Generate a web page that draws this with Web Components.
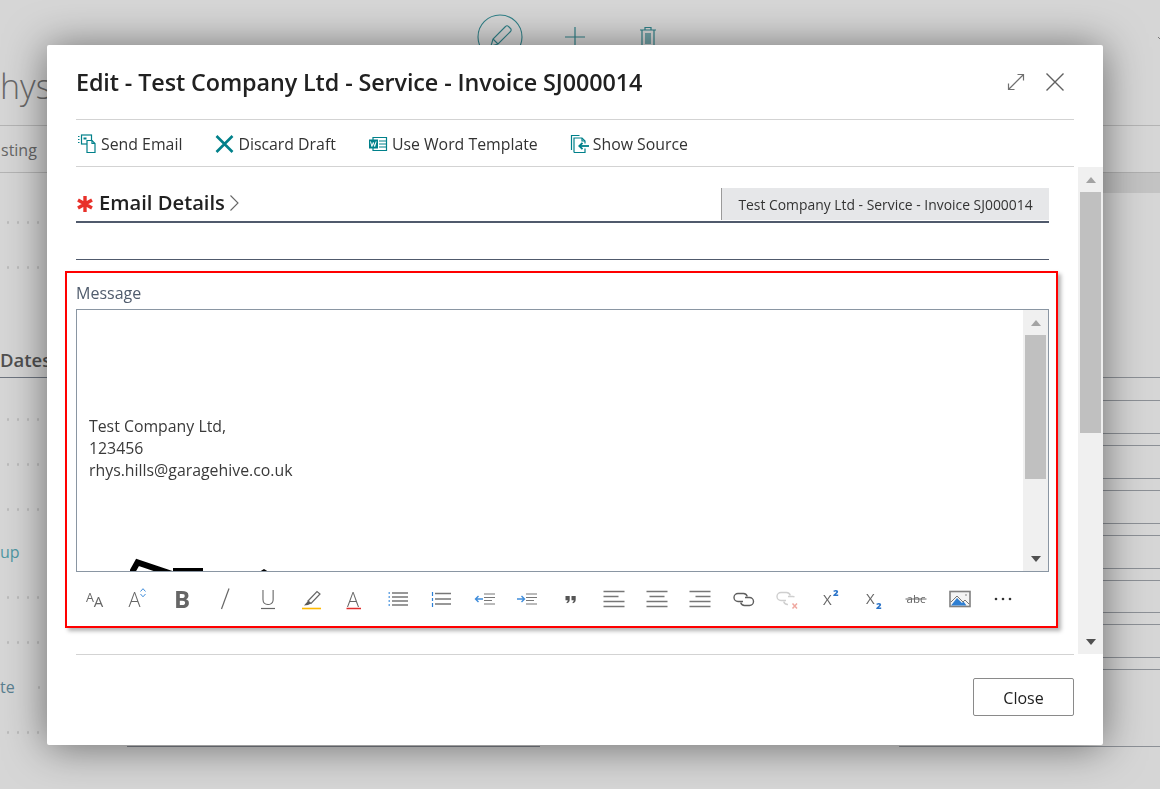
<!DOCTYPE html>
<html>
<head>
<meta charset="utf-8">
<title>Edit email</title>
<style>
  html, body { margin: 0; height: 100%; overflow: hidden; background: #d6d6d6; }
  body { font-family: "Open Sans", "Liberation Sans", sans-serif; }
</style>
</head>
<body>
<bg-page></bg-page>
<modal-dialog heading="Edit - Test Company Ltd - Service - Invoice SJ000014">
  <action-item icon="send" style="margin-left:1px">Send Email</action-item>
  <action-item icon="discard" style="margin-left:32px">Discard Draft</action-item>
  <action-item icon="word" style="margin-left:32px">Use Word Template</action-item>
  <action-item icon="source" style="margin-left:31px">Show Source</action-item>

  <email-details slot="body" subject="Test Company Ltd - Service - Invoice SJ000014"></email-details>
  <message-box slot="body">
    <div>Test Company Ltd,</div>
    <div>123456</div>
    <div>rhys.hills@garagehive.co.uk</div>
  </message-box>
</modal-dialog>

<script>
const TEAL = "#00808a";
const GREY = "#666666";
const BLUE = "#3f8ddb";

const LABEL_FONT = `font-family="Open Sans, sans-serif" fill="${GREY}"`;

const ACTION_ICONS = {
  send: `<g fill="none" stroke="${TEAL}" stroke-width="1.2">
      <path d="M1 2.5h2M1 5.5h2M1 8.5h2" stroke-dasharray="1.5 1"/>
      <rect x="4.5" y="1" width="10" height="9"/>
      <path d="M6.5 3.5h3v2h-3z" fill="${TEAL}" stroke="none"/>
      <path d="M10 6.5h5l3 3v9h-8z" fill="#fff"/>
      <path d="M15 6.5v3h3"/>
    </g>`,
  discard: `<path d="M2.500 2l16 16M18.500 2l-16 16" fill="none" stroke="${TEAL}" stroke-width="2.6"/>`,
  word: `<g fill="none" stroke="${TEAL}" stroke-width="1.2">
      <path d="M5 3.5h13.5v13H5z"/>
      <path d="M11 7h7.5M11 10h7.5M11 13h7.5"/>
      <rect x="1" y="5.5" width="9" height="9" fill="${TEAL}" stroke="none"/>
      <path d="M2.5 7.5l1.4 5 1.4-4 1.4 4 1.4-5" stroke="#fff" stroke-width="1"/>
    </g>`,
  source: `<g fill="none" stroke="${TEAL}" stroke-width="1.2">
      <path d="M2.5 16V1.5h8"/>
      <path d="M5 18.5V4h8l3 3v2.5M16 14.500v4H5"/>
      <path d="M13 4v3h3"/>
      <path d="M20 12H10.500" stroke-width="1.8"/>
      <path d="M13.500 8.800L10.300 12l3.200 3.200" stroke-width="1.8"/>
    </g>`,
};

const TOOL_ICONS = {
  fontname: `<text x="3" y="15" font-size="12.500" font-weight="400" ${LABEL_FONT}>A</text>
    <text x="10.800" y="20" font-size="15" font-weight="400" ${LABEL_FONT}>A</text>`,
  fontsize: `<text x="2.500" y="20" font-size="20" font-weight="300" ${LABEL_FONT}>A</text>
    <path d="M14.500 4.500l2.500-2.800 2.500 2.800M14.500 7l2.500 2.800L19.500 7" fill="none" stroke="${BLUE}"/>`,
  bold: `<text x="5" y="21" font-size="24" font-weight="700" ${LABEL_FONT}>B</text>`,
  italic: `<path d="M16 1.500L8.500 22" stroke="${GREY}" stroke-width="1.200"/>`,
  underline: `<text x="4.500" y="18" font-size="21" font-weight="300" ${LABEL_FONT}>U</text>
    <path d="M5 21.500h14" stroke="${GREY}" stroke-width="1.200"/>`,
  highlight: `<path d="M9 14l9-9.500 3 2.500-9 9.500z" fill="none" stroke="${GREY}" stroke-width="1.200"/>
    <path d="M9 14l3 2.500-3 1.500-4 .5z" fill="#5a5a5a"/>
    <path d="M3 21.500h19" stroke="#ffb900" stroke-width="1.600"/>`,
  color: `<text x="5" y="19.500" font-size="20" font-weight="300" ${LABEL_FONT}>A</text>
    <path d="M4.500 21.500h14.500" stroke="#e02b2b" stroke-width="1.500"/>`,
  bullets: `<path d="M2.500 6h2M2.500 10h2M2.500 14h2M2.500 18h2" stroke="${BLUE}" stroke-width="1.500" stroke-dasharray="1.500 .5"/>
    <path d="M6 6h16M6 10h16M6 14h16M6 18h16" stroke="#777" stroke-width="1.300"/>`,
  numbers: `<path d="M3.500 5v4M3.500 11v3M3.500 16v4" stroke="#2b7fd6" stroke-width="1.200"/>
    <path d="M6 6.500h16M6 12h16M6 17h16" stroke="#777" stroke-width="1.400"/>`,
  outdent: `<path d="M11 12H3.500M6.500 9l-3 3 3 3" fill="none" stroke="${BLUE}" stroke-width="1.400"/>
    <path d="M12 7h11M12 10.500h11M12 13.500h8M12 17h11" stroke="#777" stroke-width="1.200"/>`,
  indent: `<path d="M2 12h7.500M6.500 9l3 3-3 3" fill="none" stroke="${BLUE}" stroke-width="1.400"/>
    <path d="M11 7h11M11 10.500h11M11 13.500h8M11 17h11" stroke="#777" stroke-width="1.200"/>`,
  quote: `<path d="M6.500 9h4.200v3.500c0 2-1 3.500-2.800 3.700l-.5-1c.9-.4 1.300-1 1.300-2H6.500zM12.500 9h4.200v3.500c0 2-1 3.500-2.800 3.700l-.5-1c.9-.4 1.300-1 1.300-2h-2.200z" fill="#555"/>`,
  alignleft: `<path d="M1.500 4.500h21M1.500 9.500h15M1.500 14.500h21M1.500 19.500h21" stroke="#777" stroke-width="1.500"/>`,
  aligncenter: `<path d="M1.500 4.500h21M4.500 9.500h15M1.500 14.500h21M1.500 19.500h21" stroke="#777" stroke-width="1.500"/>`,
  alignright: `<path d="M1.500 4.500h21M7.500 9.500h15M1.500 14.500h21M1.500 19.500h21" stroke="#777" stroke-width="1.500"/>`,
  link: `<g fill="none" stroke="#5e5e5e" stroke-width="1.400">
      <path d="M11 14.500H6a4 4 0 0 1 0-8h5.500a4 4 0 0 1 3.800 3"/>
      <path d="M13 10.500h4.500a4 4 0 0 1 0 8h-5a4 4 0 0 1-3.800-3"/>
    </g>`,
  unlink: `<g fill="none" stroke="#cfcfcf" stroke-width="1.400">
      <path d="M11 13.500H6a4 4 0 0 1 0-8h5.500a4 4 0 0 1 3.800 3"/>
      <path d="M13 9.500h5a4 4 0 0 1 1.500 .3M13 17.500h-.500a4 4 0 0 1-3.800-3"/>
    </g>
    <path d="M17.500 16.500l4.500 5M22 16.500l-4.500 5" stroke="#f0a8a0" stroke-width="1.500"/>`,
  sup: `<text x="5" y="18" font-size="15" font-weight="400" ${LABEL_FONT}>X</text>
    <text x="15" y="9" font-size="9.500" font-weight="800" font-family="Open Sans, sans-serif" fill="#2b74c9">2</text>`,
  sub: `<text x="5" y="17" font-size="15" font-weight="400" ${LABEL_FONT}>X</text>
    <text x="15" y="22" font-size="9.500" font-weight="800" font-family="Open Sans, sans-serif" fill="#2b74c9">2</text>`,
  strike: `<text x="12" y="15.500" text-anchor="middle" font-size="11.500" ${LABEL_FONT}>abc</text>
    <path d="M1.500 12h21" stroke="${GREY}"/>`,
  image: `<rect x="2" y="4.500" width="20" height="15" fill="#f4f4f4" stroke="#808080" stroke-width="1.600"/>
    <path d="M3 18.500l6-7.500 5 5 1.500-1.500 3 4z" fill="#2f7fd2"/>
    <path d="M3 15l6-6 6 6 2-2 4 4" fill="none" stroke="#777"/>
    <circle cx="18" cy="8" r=".8" fill="#777"/>`,
  more: `<circle cx="5" cy="12" r="1.300" fill="#333"/><circle cx="12" cy="12" r="1.300" fill="#333"/><circle cx="19" cy="12" r="1.300" fill="#333"/>`,
};

// faded page behind the dialog
class BgPage extends HTMLElement {
  constructor() {
    super();
    this.attachShadow({mode: "open"});

    const lineYs = [377, 400, 433, 445, 478, 490, 523, 535, 568, 580, 612, 624, 657, 669, 746];
    let previous = 192;
    const lines = lineYs.map((y) => {
      const row = `<div class="line" style="height:${y - previous - 1}px"></div>`;
      previous = y;
      return row;
    }).join("");

    this.shadowRoot.innerHTML = `
      <style>
        :host { display: block; height: 100vh; overflow: hidden; color: #666; }
        .top {
          height: 126px;
          box-sizing: border-box;
          border-bottom: 1px solid #b4b4b4;
          display: flex;
          align-items: flex-start;
        }
        .name { font-size: 34px; font-weight: 300; line-height: 46px; margin-top: 63px; width: 477px; flex: none; color: #6a6a6a; }
        .actions { display: flex; align-items: flex-start; padding-top: 14px; flex: none; }
        .circle { width: 46px; height: 46px; display: block; }
        .plus { width: 22px; height: 22px; display: block; margin: 12px 0 0 41px; }
        .trash { width: 18px; height: 22px; display: block; margin: 12px 0 0 53px; }
        .chev { width: 10px; height: 10px; display: block; margin: 34px 0 0 auto; }
        .main { display: flex; }
        .left { width: 540px; flex: none; }
        .right { width: 261px; margin-left: auto; }
        .tabs { height: 46px; border-bottom: 1px solid #b4b4b4; font-size: 16px; line-height: 49px; }
        .tabs span { margin-left: 1px; }
        .dots {
          height: 45px;
          background: radial-gradient(circle, #bcbcbc 1px, transparent 1.500px) 3px 20px / 10px 5px repeat-x;
        }
        .dates {
          height: 88px;
          box-sizing: border-box;
          border-bottom: 1px solid #6e7580;
          font-size: 18.500px;
          font-weight: 600;
          color: #505050;
          display: flex;
          align-items: flex-end;
          line-height: 34px;
          width: 300px;
        }
        .teal { height: 43px; font-size: 16px; line-height: 41px; color: #4f98a3; }
        .te { height: 45px; display: flex; font-size: 16px; line-height: 45px; color: #5a7f90; }
        .te i {
          flex: 1;
          background: radial-gradient(circle, #bcbcbc 1px, transparent 1.500px) 3px 20px / 10px 5px repeat-x;
          margin-left: 16px;
        }
        .last { display: flex; height: 37px; }
        .last div:first-child {
          width: 127px;
          background: radial-gradient(circle, #bcbcbc 1px, transparent 1.500px) 3px 20px / 10px 5px repeat-x;
        }
        .last div:last-child { flex: 1; border-bottom: 1px solid #7d828a; }
        .band { height: 21px; margin-top: 46px; background: #c3c3c3; border-top: 1px solid #b0b0b0; box-sizing: border-box; }
        .line { border-bottom: 1px solid #8c9096; }
      </style>
      <div class="top">
        <div class="name">hys</div>
        <div class="actions">
          <svg class="circle" viewBox="0 0 46 46" fill="none" stroke="#2f8088" stroke-width="1.100">
            <circle cx="23" cy="23" r="22"/>
            <path d="M14 32l2-7 12.500-12.500a2 2 0 0 1 3 0l2 2a2 2 0 0 1 0 3L21 30z"/>
            <path d="M16 25l5 5"/>
          </svg>
          <svg class="plus" viewBox="0 0 22 22" stroke="#2f8088" stroke-width="1.200"><path d="M11 1v20M1 11h20"/></svg>
          <svg class="trash" viewBox="0 0 18 22" fill="none" stroke="#2f8088" stroke-width="1.200">
            <path d="M1 4h16M6 4V1.500h6V4M3 4v17h12V4M7 7v11M9 7v11M11 7v11"/>
          </svg>
        </div>
        <svg class="chev" viewBox="0 0 10 10" fill="none" stroke="#777"><path d="M8 3l3 3"/></svg>
      </div>
      <div class="main">
        <div class="left">
          <div class="tabs"><span>sting</span></div>
          <div style="height:27px"></div>
          <div class="dots"></div>
          <div class="dots"></div>
          <div class="dates">Dates</div>
          <div style="height:19px"></div>
          <div class="dots"></div>
          <div class="dots"></div>
          <div class="dots"></div>
          <div class="teal">up</div>
          <div class="dots"></div>
          <div class="dots"></div>
          <div class="te"><span>te</span><i></i></div>
          <div class="last"><div></div><div></div></div>
        </div>
        <div class="right">
          <div class="band"></div>
          ${lines}
        </div>
      </div>
    `;
  }
}

class ModalDialog extends HTMLElement {
  constructor() {
    super();
    this.attachShadow({mode: "open"});
    this.shadowRoot.innerHTML = `
      <style>
        :host {
          position: fixed;
          left: 47px;
          top: 45px;
          width: 1056px;
          height: 700px;
          background: #fff;
          border-radius: 2px;
          box-shadow: 0 2px 42px rgba(0, 0, 0, .5);
          display: flex;
          flex-direction: column;
          color: #212121;
        }
        header {
          height: 75px;
          margin: 0 29px;
          box-sizing: border-box;
          border-bottom: 1px solid #d3d3d3;
          display: flex;
          align-items: center;
          justify-content: space-between;
        }
        h1 { margin: 0; font-size: 23.350px; font-weight: 600; letter-spacing: -.1px; white-space: nowrap; }
        .win { display: flex; gap: 21px; margin-right: 10px; }
        .win svg { display: block; width: 18px; height: 18px; }
        nav {
          height: 47px;
          margin: 0 29px;
          padding-top: 2px;
          box-sizing: border-box;
          border-bottom: 1px solid #d3d3d3;
          display: flex;
          align-items: center;
        }
        .scroller { height: 487px; display: flex; }
        .content { flex: 1; padding: 0 29px; min-width: 0; box-sizing: border-box; width: 1002px; }
        footer {
          flex: 1;
          margin: 0 29px;
          border-top: 1px solid #d3d3d3;
          display: flex;
          justify-content: flex-end;
          align-items: flex-start;
          padding-top: 23px;
        }
        button {
          width: 101px;
          height: 38px;
          box-sizing: border-box;
          border: 1px solid #8a8a8a;
          border-radius: 2px;
          background: #fff;
          color: #212121;
          font: 16px "Open Sans", sans-serif;
          padding: 1px 0 0;
        }
      </style>
      <header>
        <h1></h1>
        <div class="win">
          <svg viewBox="0 0 18 18" fill="none" stroke="#707070" stroke-width="1.200">
            <path d="M1.500 16.500l15-15M10.500 1.500h6v6M1.500 10.500v6h6"/>
          </svg>
          <svg viewBox="0 0 18 18" fill="none" stroke="#606060" stroke-width="1.400">
            <path d="M.5.5l17 17M17.500.5l-17 17"/>
          </svg>
        </div>
      </header>
      <nav><slot></slot></nav>
      <div class="scroller">
        <div class="content"><slot name="body"></slot></div>
        <scroll-rail thumb-height="241" style="width:25px"></scroll-rail>
      </div>
      <footer><button>Close</button></footer>
    `;
    this.shadowRoot.querySelector("h1").textContent = this.getAttribute("heading");
  }
}

class ActionItem extends HTMLElement {
  constructor() {
    super();
    this.attachShadow({mode: "open"});
    this.shadowRoot.innerHTML = `
      <style>
        :host { display: flex; align-items: center; gap: 4px; font-size: 15.850px; color: #333; }
        svg { width: 20px; height: 20px; display: block; }
      </style>
      <svg viewBox="0 0 20 20">${ACTION_ICONS[this.getAttribute("icon")]}</svg>
      <slot></slot>
    `;
  }
}

class EmailDetails extends HTMLElement {
  constructor() {
    super();
    this.attachShadow({mode: "open"});
    this.shadowRoot.innerHTML = `
      <style>
        :host { display: block; padding-top: 21px; }
        .head {
          height: 33px;
          border-bottom: 2px solid #505a6c;
          display: flex;
          align-items: flex-start;
          margin-bottom: 36px;
        }
        .star { width: 18px; height: 18px; display: block; margin: 7px 5px 0 0; }
        h2 { margin: 0; font-size: 20.200px; font-weight: 600; line-height: 28px; color: #212121; }
        .chev { width: 10px; height: 18px; display: block; margin: 6px 0 0 4px; }
        .subject {
          margin-left: auto;
          width: 328px;
          height: 32px;
          box-sizing: border-box;
          background: #e6e7e9;
          border-left: 1px solid #9a9a9a;
          font-size: 13.900px;
          line-height: 34px;
          text-align: center;
          color: #333;
        }
        .rule { border-top: 1px solid #505a6c; height: 11px; }
      </style>
      <div class="head">
        <svg class="star" viewBox="0 0 18 18" stroke="#e8312a" stroke-width="3.400">
          <path d="M9 1v16M2 5l14 8M16 5L2 13"/>
        </svg>
        <h2>Email Details</h2>
        <svg class="chev" viewBox="0 0 10 18" fill="none" stroke="#666" stroke-width="1.100"><path d="M1.500 1.500L9 9l-7.500 7.500"/></svg>
        <div class="subject">${this.getAttribute("subject")}</div>
      </div>
      <div class="rule"></div>
    `;
  }
}

class MessageBox extends HTMLElement {
  constructor() {
    super();
    this.attachShadow({mode: "open"});
    const tools = Object.keys(TOOL_ICONS).map(name => `<tool-icon name="${name}"></tool-icon>`).join("");
    this.shadowRoot.innerHTML = `
      <style>
        :host {
          display: block;
          margin: 0 -9px 0 -11px;
          height: 357px;
          box-sizing: border-box;
          border: 2px solid #f00;
          padding: 0 7px 0 9px;
          box-shadow: 3px 3px 4px rgba(0, 0, 0, .3);
          background: #fff;
        }
        label { display: block; height: 36px; font-size: 16px; line-height: 40px; color: #505c6d; }
        .editor {
          height: 263px;
          box-sizing: border-box;
          border: 1px solid #8a96a3;
          display: flex;
          overflow: hidden;
        }
        .doc {
          flex: 1;
          min-width: 0;
          padding: 105px 0 0 12px;
          font-size: 15.850px;
          line-height: 22px;
          color: #3a3a3a;
          overflow: hidden;
        }
        .logo { display: block; margin: 77px 0 0 41px; }
        .tools { display: flex; margin: 15px 0 0 -2.600px; }
      </style>
      <label>Message</label>
      <div class="editor">
        <div class="doc">
          <slot></slot>
          <svg class="logo" width="150" height="30" viewBox="0 0 150 30">
            <path d="M1 16L7.500 4.500 42 16" fill="none" stroke="#000" stroke-width="6"/>
            <path d="M43 10h30v10H43zM130 13.500l4-2.500 4 2.500v6h-8z" fill="#000"/>
          </svg>
        </div>
        <scroll-rail thumb-height="144" style="width:25px"></scroll-rail>
      </div>
      <div class="tools">${tools}</div>
    `;
  }
}

class ToolIcon extends HTMLElement {
  constructor() {
    super();
    this.attachShadow({mode: "open"});
    this.shadowRoot.innerHTML = `
      <style>
        :host { display: flex; justify-content: center; width: 43.240px; flex: none; }
        svg { width: 24px; height: 24px; display: block; overflow: visible; }
      </style>
      <svg viewBox="0 0 24 24">${TOOL_ICONS[this.getAttribute("name")]}</svg>
    `;
  }
}

class ScrollRail extends HTMLElement {
  constructor() {
    super();
    this.attachShadow({mode: "open"});
    this.shadowRoot.innerHTML = `
      <style>
        :host { display: flex; flex-direction: column; flex: none; background: #f0f0f0; height: 100%; box-sizing: border-box; }
        .btn { height: 25px; display: flex; align-items: center; justify-content: center; flex: none; }
        .up { width: 0; height: 0; border: 5.500px solid transparent; border-top: 0; border-bottom: 6px solid #a3a3a3; }
        .down { width: 0; height: 0; border: 5.500px solid transparent; border-bottom: 0; border-top: 6px solid #505050; }
        .thumb { background: #c0c0c0; margin: 0 2px; flex: none; height: ${this.getAttribute("thumb-height")}px; }
        .rest { flex: 1; }
      </style>
      <div class="btn"><div class="up"></div></div>
      <div class="thumb"></div>
      <div class="rest"></div>
      <div class="btn"><div class="down"></div></div>
    `;
  }
}

customElements.define("bg-page", BgPage);
customElements.define("action-item", ActionItem);
customElements.define("email-details", EmailDetails);
customElements.define("tool-icon", ToolIcon);
customElements.define("scroll-rail", ScrollRail);
customElements.define("message-box", MessageBox);
customElements.define("modal-dialog", ModalDialog);
</script>
</body>
</html>
